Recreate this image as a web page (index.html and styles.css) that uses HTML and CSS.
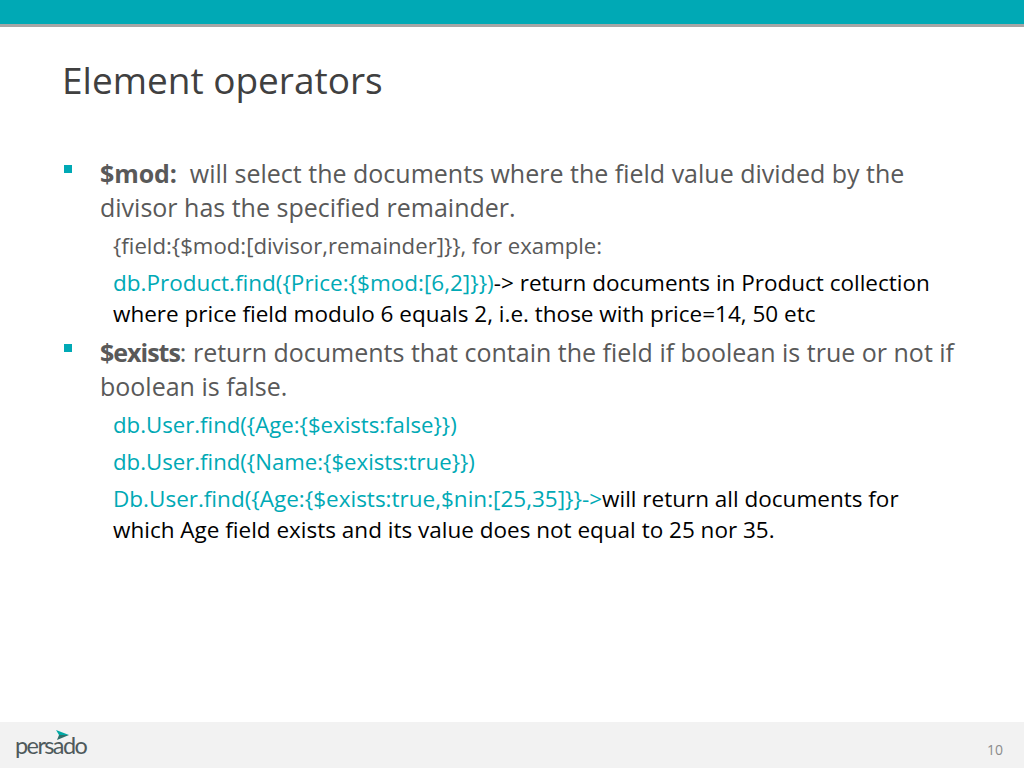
FILE: index.html
```html
<!DOCTYPE html>
<html lang="en">
<head>
<meta charset="utf-8">
<title>Element operators</title>
<link rel="stylesheet" href="styles.css">
</head>
<body>
<div class="slide">
  <header class="topbar"></header>
  <main class="content">
    <h1 class="title">Element operators</h1>
    <ul class="list">
      <li class="item"><span class="bullet"></span><p class="lead"><b>$mod:</b>&nbsp; will select the documents where the field value divided by the divisor has the specified remainder.</p></li>
      <li class="sub s1 narrow">{field:{$mod:[divisor,remainder]}}, for example:</li>
      <li class="sub s2"><span class="teal">db.Product.find({Price:{$mod:[6,2]}})</span><span class="black">-&gt; return documents in Product collection where price field modulo 6 equals 2, i.e. those with price=14, 50 etc</span></li>
      <li class="item item2"><span class="bullet"></span><p class="lead"><b class="tight">$exists</b>: return documents that contain the field if boolean is true or not if boolean is false.</p></li>
      <li class="sub s1 teal narrow">db.User.find({Age:{$exists:false}})</li>
      <li class="sub s2 teal narrow">db.User.find({Name:{$exists:true}})</li>
      <li class="sub s2"><span class="teal">Db.User.find({Age:{$exists:true,$nin:[25,35]}}-&gt;</span><span class="black">will return all documents for which Age field exists and its value does not equal to 25 nor 35.</span></li>
    </ul>
  </main>
  <footer class="footer">
    <div class="logo">
      <svg class="mark" width="14" height="11" viewBox="0 0 14 11"><path d="M0 0 L13 5 L3 5 Z" fill="#00a9a5"/><path d="M3 5 L13 5 L1 10 Z" fill="#2f6f6a"/></svg>
      <span class="brand">persado</span>
    </div>
    <span class="page">10</span>
  </footer>
</div>
</body>
</html>
```
FILE: styles.css
```css
html, body { margin: 0; padding: 0; background: #fff; }
.slide { width: 1024px; height: 768px; display: flex; flex-direction: column; font-family: "Open Sans", sans-serif; overflow: hidden; }
.topbar { height: 24px; background: #00a9b5; border-bottom: 3px solid #a6a6a6; flex: none; }
.content { flex: 1; padding: 0 64px 0 62px; }
.title { margin: 29px 0 0; font-size: 37px; line-height: 48px; font-weight: 400; color: #404040; }
.list { list-style: none; margin: 52px 0 0 1px; padding: 0; }
.item { display: flex; color: #595959; font-size: 25px; line-height: 34px; }
.item2 { margin-top: 6px; }
.bullet { flex: none; width: 8px; height: 8px; margin: 9px 28px 0 1px; background: #00a9b5; }
.lead { margin: 0; }
.lead b { font-weight: 700; letter-spacing: -0.1px; }
.lead b.tight { letter-spacing: -1px; }
.sub { margin: 0 20px 0 50px; font-size: 22.5px; line-height: 31px; color: #595959; }
.narrow { font-size: 22.2px; }
.s1 { margin-top: 6px; }
.s2 { margin-top: 6px; }
.teal { color: #00a9b5; }
.black { color: #000; }
.footer { height: 46px; flex: none; background: #f2f2f2; display: flex; align-items: center; justify-content: space-between; padding: 0 21px 0 15px; }
.logo { position: relative; }
.mark { position: absolute; left: 41px; top: -1px; }
.brand { font-family: "Lato", sans-serif; font-size: 23.5px; letter-spacing: -1.6px; color: #4f5a5c; }
.page { font-size: 14px; color: #8c8c8c; padding-top: 9px; }
```
